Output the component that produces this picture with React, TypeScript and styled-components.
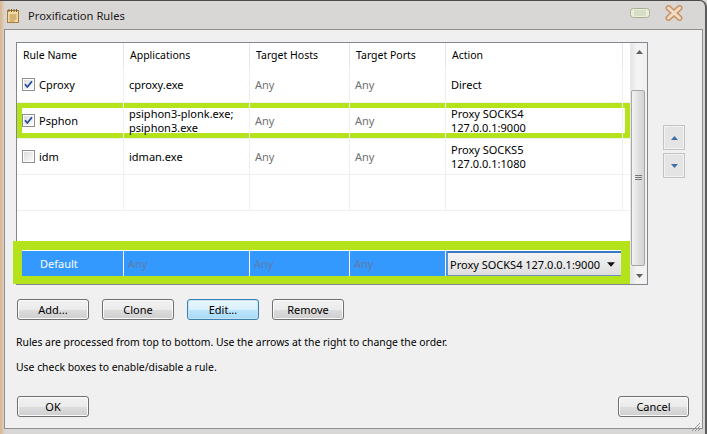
import React from "react";
import styled, { createGlobalStyle, css } from "styled-components";

const GlobalStyle = createGlobalStyle`
  html, body { margin: 0; padding: 0; }
  body {
    width: 707px; height: 434px; overflow: hidden;
    background: #d9d7d6;
    font-family: "Noto Sans", "DejaVu Sans", sans-serif;
    color: #000;
  }
  * { box-sizing: border-box; }
`;

const Window = styled.div`
  width: 707px;
  height: 434px;
  display: flex;
  flex-direction: column;
  background: linear-gradient(90deg, #d9b58e 0px, #dcc8b2 3px, #d9d7d6 5px);
  border-top: 1px solid #4b4b4b;
  border-right: 2px solid #5c5c5c;
  border-top-right-radius: 7px;
`;

const TitleBar = styled.div`
  height: 28px;
  display: flex;
  align-items: center;
  padding-left: 6px;
  gap: 8px;
`;

const Title = styled.span`
  font-size: 11.2px;
  color: #1a1a1a;
  flex: 1;
`;

const Caption = styled.div`
  display: flex;
  align-items: center;
  gap: 15px;
  margin-right: 22px;
  margin-top: -4px;
`;

const Client = styled.div`
  flex: 1;
  margin: 0 2px 5px 4px;
  background: #f0f0f0;
  border: 1px solid #8e8f8f;
  padding: 12px 13px 11px 11px;
  display: flex;
  flex-direction: column;
  position: relative;
`;

const TopRow = styled.div`
  display: flex;
  align-items: flex-start;
`;

const ListView = styled.div`
  position: relative;
  width: 632px;
  height: 243px;
  border: 1px solid #828790;
  background: #fff;
  display: flex;
`;

const Table = styled.div`
  width: 613px;
  display: flex;
  flex-direction: column;
`;

const Header = styled.div`
  height: 24px;
  display: flex;
  flex-shrink: 0;
`;

const HeaderCell = styled.div<{ $w: number }>`
  width: ${(p) => p.$w}px;
  flex-shrink: 0;
  border-right: 1px solid #e3e5e8;
  padding-left: 6px;
  font-size: 10.5px;
  line-height: 24px;
  white-space: nowrap;
  &:last-child { border-right: none; }
`;

const Row = styled.div<{ $h?: number; $hl?: boolean; $noLine?: boolean }>`
  height: ${(p) => p.$h ?? 36}px;
  display: flex;
  flex-shrink: 0;
  border-bottom: ${(p) => (p.$noLine ? "none" : "1px solid #f0f0f0")};
  position: relative;
  ${(p) =>
    p.$hl &&
    css`
      box-shadow: inset 0 0 0 5px #b4e31c;
    `}
`;

const Cell = styled.div<{ $w: number; $muted?: boolean; $lines?: boolean }>`
  width: ${(p) => p.$w}px;
  flex-shrink: 0;
  border-right: ${(p) => (p.$lines === false ? "none" : "1px solid #f0f0f0")};
  padding: 0 5px;
  display: flex;
  align-items: center;
  gap: 4px;
  font-size: 11px;
  line-height: 14px;
  color: ${(p) => (p.$muted ? "#6f6f6f" : "#000")};
  white-space: nowrap;
  &:last-child { border-right: none; }
`;

const Filler = styled.div`
  flex: 1;
`;

const DefaultSection = styled.div`
  height: 41px;
  flex-shrink: 0;
  padding: 8px 8px 7px 5px;
`;

const BlueRow = styled.div`
  height: 25px;
  background: #3399ff;
  display: flex;
`;

const BlueCell = styled.div<{ $w: number; $white?: boolean }>`
  width: ${(p) => p.$w}px;
  flex-shrink: 0;
  border-right: 1px solid #fff;
  display: flex;
  align-items: center;
  padding-left: ${(p) => (p.$white ? 18 : 4)}px;
  font-size: 11px;
  color: ${(p) => (p.$white ? "#fff" : "#5f7ba8")};
`;

const Combo = styled.div`
  flex: 1;
  margin-left: 1px;
  border: 1px solid #6b8fbf;
  border-top: 2px solid #3a78c8;
  background: linear-gradient(#f4f4f4, #dedede);
  display: flex;
  align-items: center;
  justify-content: space-between;
  padding: 0 6px 0 2px;
  font-size: 11px;
  color: #000;
`;

const Annotation = styled.div`
  position: absolute;
  left: -4px;
  top: 198px;
  width: 617px;
  height: 43px;
  border: 9px solid #b4e31c;
  border-bottom-width: 8px;
  pointer-events: none;
`;

const ScrollBar = styled.div`
  width: 17px;
  display: flex;
  flex-direction: column;
  align-items: center;
  background: linear-gradient(90deg, #e6e6e6, #f4f4f4 40%, #f0f0f0);
  border-left: 1px solid #e8e8e8;
`;

const ScrollArrow = styled.div`
  height: 17px;
  width: 100%;
  display: flex;
  align-items: center;
  justify-content: center;
`;

const Thumb = styled.div`
  margin-top: 30px;
  width: 14px;
  height: 176px;
  margin-right: 2px;
  border: 1px solid #a7a7a7;
  border-radius: 2px;
  background: linear-gradient(90deg, #f3f3f3, #e1e1e1 50%, #d3d3d3);
  display: flex;
  align-items: center;
  justify-content: center;
`;

const Track = styled.div`
  flex: 1;
`;

const ArrowColumn = styled.div`
  margin-left: 15px;
  margin-top: 83px;
  display: flex;
  flex-direction: column;
  gap: 3px;
`;

const ArrowButton = styled.div`
  width: 22px;
  height: 25px;
  border: 1px solid #c3c3c3;
  background: #e4e4e4;
  box-shadow: inset 0 0 0 1px #f2f2f2;
  display: flex;
  align-items: center;
  justify-content: center;
`;

const ButtonRow = styled.div<{ $spread?: boolean; $top: number }>`
  display: flex;
  gap: 13px;
  margin-top: ${(p) => p.$top}px;
  padding-left: 1px;
  justify-content: ${(p) => (p.$spread ? "space-between" : "flex-start")};
`;

const Button = styled.div<{ $focus?: boolean; $w?: number }>`
  width: ${(p) => p.$w ?? 72}px;
  height: 21px;
  border-radius: 3px;
  border: 1px solid ${(p) => (p.$focus ? "#3c7fb1" : "#707070")};
  background: ${(p) =>
    p.$focus
      ? "linear-gradient(#eaf6fd 0%, #d9f0fc 50%, #bee6fd 51%, #a7d9f5 100%)"
      : "linear-gradient(#f2f2f2 0%, #ebebeb 50%, #dddddd 51%, #cfcfcf 100%)"};
  box-shadow: inset 0 0 0 1px ${(p) => (p.$focus ? "#c4e5f6" : "#fbfbfb")};
  display: flex;
  align-items: center;
  justify-content: center;
  font-size: 11px;
  color: #000;
`;

const Note = styled.div<{ $top: number }>`
  margin-top: ${(p) => p.$top}px;
  font-size: 10.4px;
  line-height: 15px;
  white-space: nowrap;
`;

const Grip = styled.div`
  position: absolute;
  right: 1px;
  bottom: 1px;
  width: 12px;
  height: 12px;
`;

const CheckBox = ({ checked }: { checked?: boolean }) => (
  <svg width="13" height="13" viewBox="0 0 13 13">
    <defs>
      <linearGradient id="cbg" x1="0" y1="0" x2="1" y2="1">
        <stop offset="0" stopColor="#dcdcdc" />
        <stop offset="1" stopColor="#fbfbfb" />
      </linearGradient>
    </defs>
    <rect x="0.5" y="0.5" width="12" height="12" fill="#fff" stroke="#8e8f8f" />
    <rect x="2" y="2" width="9" height="9" fill="url(#cbg)" />
    {checked && (
      <path d="M3 6.3 L5.3 9 L10 3.2" fill="none" stroke="#21479b" strokeWidth="1.7" />
    )}
  </svg>
);

const TriUp = ({ color = "#555" }: { color?: string }) => (
  <svg width="7" height="4" viewBox="0 0 7 4">
    <path d="M0 4 L3.5 0 L7 4 Z" fill={color} />
  </svg>
);
const TriDown = ({ color = "#555", w = 7, h = 4 }: { color?: string; w?: number; h?: number }) => (
  <svg width={w} height={h} viewBox="0 0 7 4">
    <path d="M0 0 L3.5 4 L7 0 Z" fill={color} />
  </svg>
);

const AppIcon = () => (
  <svg width="14" height="15" viewBox="0 0 14 15">
    <rect x="1.5" y="2.5" width="11" height="12" fill="#f2dca6" stroke="#a87c3c" />
    <path d="M3 1 v3 M5.5 1 v3 M8 1 v3 M10.5 1 v3" stroke="#7a5a30" strokeWidth="1" />
    <path d="M3.5 7 h7 M3.5 9 h7 M3.5 11 h7 M3.5 13 h5" stroke="#b68a48" strokeWidth="1" />
  </svg>
);

const MinIcon = () => (
  <svg width="20" height="10" viewBox="0 0 20 10">
    <rect x="0.5" y="0.5" width="19" height="9" rx="3" fill="#e9efd9" stroke="#a9ae94" />
    <path d="M4 3 h12 M4 5 h12 M4 7 h12" stroke="#c7cfb4" strokeWidth="1" />
  </svg>
);

const CloseIcon = () => (
  <svg width="18" height="16" viewBox="0 0 18 16">
    <path d="M3.5 3 L14.5 13 M14.5 3 L3.5 13" stroke="#c8946a" strokeWidth="6" strokeLinecap="round" />
    <path d="M3.5 3 L14.5 13 M14.5 3 L3.5 13" stroke="#f3dcc6" strokeWidth="3" strokeLinecap="round" />
  </svg>
);

const GripIcon = () => (
  <svg width="12" height="12" viewBox="0 0 12 12">
    <path d="M11 3 L3 11 M11 6 L6 11 M11 9 L9 11" stroke="#9a9a9a" strokeWidth="1" />
  </svg>
);

const cols = [107, 126, 100, 96, 177, 7];
const headers = ["Rule Name", "Applications", "Target Hosts", "Target Ports", "Action", ""];

type Rule = { name: string; checked: boolean; apps: string[]; action: string[]; hl?: boolean };
const rules: Rule[] = [
  { name: "Cproxy", checked: true, apps: ["cproxy.exe"], action: ["Direct"] },
  { name: "Psphon", checked: true, apps: ["psiphon3-plonk.exe;", "psiphon3.exe"], action: ["Proxy SOCKS4", "127.0.0.1:9000"], hl: true },
  { name: "idm", checked: false, apps: ["idman.exe"], action: ["Proxy SOCKS5", "127.0.0.1:1080"] },
];

const Lines = ({ lines }: { lines: string[] }) => (
  <span>
    {lines.map((l, i) => (
      <React.Fragment key={i}>
        {i > 0 && <br />}
        {l}
      </React.Fragment>
    ))}
  </span>
);

export default function App() {
  return (
    <>
      <GlobalStyle />
      <Window>
        <TitleBar>
          <AppIcon />
          <Title>Proxification Rules</Title>
          <Caption>
            <MinIcon />
            <CloseIcon />
          </Caption>
        </TitleBar>
        <Client>
          <TopRow>
            <ListView>
              <Table>
                <Header>
                  {headers.map((h, i) => (
                    <HeaderCell key={i} $w={cols[i]}>{h}</HeaderCell>
                  ))}
                </Header>
                {rules.map((r) => (
                  <Row key={r.name} $hl={r.hl}>
                    <Cell $w={cols[0]}>
                      <CheckBox checked={r.checked} />
                      {r.name}
                    </Cell>
                    <Cell $w={cols[1]}><Lines lines={r.apps} /></Cell>
                    <Cell $w={cols[2]} $muted>Any</Cell>
                    <Cell $w={cols[3]} $muted>Any</Cell>
                    <Cell $w={cols[4]}><Lines lines={r.action} /></Cell>
                    <Cell $w={cols[5]} $lines={false} />
                  </Row>
                ))}
                <Row>
                  {cols.map((w, i) => (
                    <Cell key={i} $w={w} />
                  ))}
                </Row>
                <Filler />
                <DefaultSection>
                  <BlueRow>
                    <BlueCell $w={102} $white>Default</BlueCell>
                    <BlueCell $w={126}>Any</BlueCell>
                    <BlueCell $w={100}>Any</BlueCell>
                    <BlueCell $w={96}>Any</BlueCell>
                    <Combo>
                      <span>Proxy SOCKS4 127.0.0.1:9000</span>
                      <TriDown color="#111" w={8} h={5} />
                    </Combo>
                  </BlueRow>
                </DefaultSection>
              </Table>
              <ScrollBar>
                <ScrollArrow><TriUp color="#606060" /></ScrollArrow>
                <Thumb>
                  <svg width="7" height="6" viewBox="0 0 7 6">
                    <path d="M0 0.5 h7 M0 2.5 h7 M0 4.5 h7" stroke="#777" strokeWidth="1" />
                  </svg>
                </Thumb>
                <Track />
                <ScrollArrow><TriDown color="#606060" /></ScrollArrow>
              </ScrollBar>
              <Annotation />
            </ListView>
            <ArrowColumn>
              <ArrowButton><TriUp color="#3d6fa8" /></ArrowButton>
              <ArrowButton><TriDown color="#3d6fa8" /></ArrowButton>
            </ArrowColumn>
          </TopRow>
          <ButtonRow $top={14}>
            <Button>Add...</Button>
            <Button>Clone</Button>
            <Button $focus>Edit...</Button>
            <Button>Remove</Button>
          </ButtonRow>
          <Note $top={15}>Rules are processed from top to bottom. Use the arrows at the right to change the order.</Note>
          <Note $top={10}>Use check boxes to enable/disable a rule.</Note>
          <ButtonRow $spread $top={21}>
            <Button>OK</Button>
            <Button $w={71}>Cancel</Button>
          </ButtonRow>
          <Grip><GripIcon /></Grip>
        </Client>
      </Window>
    </>
  );
}
